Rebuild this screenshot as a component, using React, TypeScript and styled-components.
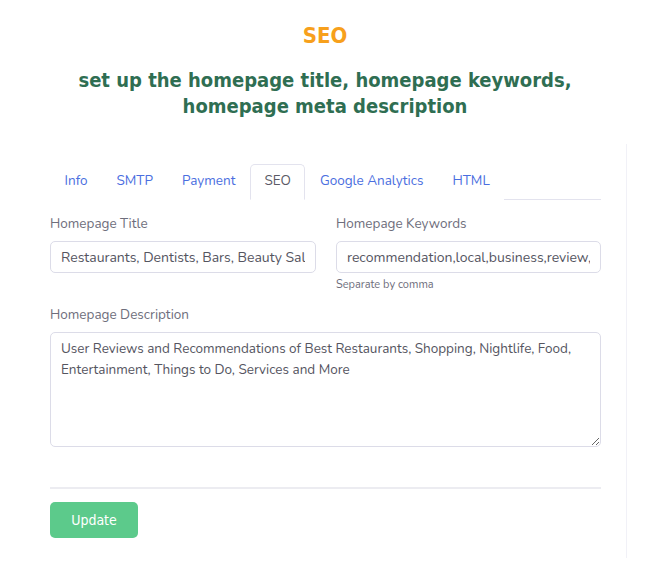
import React from "react";
import styled, { createGlobalStyle } from "styled-components";

const Global = createGlobalStyle`
  html, body { margin: 0; padding: 0; background: #ffffff; }
  body { font-family: "Nunito", "Lato", "Noto Sans", sans-serif; }
  * { box-sizing: border-box; }
`;

const Page = styled.div`
  width: 650px;
  height: 565px;
  display: flex;
  flex-direction: column;
  align-items: stretch;
  overflow: hidden;
`;

const Header = styled.header`
  display: flex;
  flex-direction: column;
  align-items: center;
  padding-top: 23px;
  font-family: "DejaVu Sans", sans-serif;
  font-stretch: condensed;
  font-weight: bold;
`;

const Title = styled.h1`
  margin: 0;
  font-size: 22px;
  line-height: 26px;
  color: #f7a01c;
`;

const Subtitle = styled.h2`
  margin: 18px 0 0;
  font-size: 20px;
  line-height: 26px;
  color: #2f6e52;
  text-align: center;
  width: 560px;
`;

const Card = styled.section`
  margin: 25px 0 0 0;
  width: 627px;
  height: 414px;
  border-right: 1px solid #f1f1f7;
  padding: 20px 25px 0 50px;
  display: flex;
  flex-direction: column;
`;

const Tabs = styled.nav`
  display: flex;
  border-bottom: 1px solid #e3e3ee;
  height: 36px;
  width: 551px;
`;

const Tab = styled.div<{ $active?: boolean }>`
  height: 36px;
  padding: 0 13.5px 3px;
  display: flex;
  align-items: center;
  font-size: 13.5px;
  color: ${(p) => (p.$active ? "#5a5a66" : "#4a6ee0")};
  border: 1px solid ${(p) => (p.$active ? "#e3e3ee" : "transparent")};
  border-bottom-color: ${(p) => (p.$active ? "#ffffff" : "transparent")};
  border-radius: 5px 5px 0 0;
  background: #fff;
  margin-bottom: -1px;
`;

const Row = styled.div`
  display: grid;
  grid-template-columns: 266px 265px;
  column-gap: 20px;
  width: 551px;
  margin-top: 15px;
`;

const Field = styled.div`
  display: flex;
  flex-direction: column;
`;

const Label = styled.label`
  font-size: 13.5px;
  line-height: 18px;
  color: #6e6e7c;
  margin-bottom: 8px;
`;

const Input = styled.input`
  height: 32px;
  width: 100%;
  border: 1px solid #dcdce8;
  border-radius: 5px;
  padding: 0 10px;
  font-family: inherit;
  font-size: 14px;
  color: #55555f;
  background: #fff;
  outline: none;
`;

const Help = styled.small`
  font-size: 11px;
  color: #6e6e7c;
  margin-top: 5px;
  line-height: 14px;
`;

const DescField = styled(Field)`
  width: 551px;
  margin-top: 14px;
`;

const TextArea = styled.textarea`
  display: block;
  width: 100%;
  height: 115px;
  border: 1px solid #dcdce8;
  border-radius: 5px;
  padding: 5px 10px;
  font-family: inherit;
  font-size: 13.5px;
  line-height: 21px;
  color: #55555f;
  background: #fff;
  outline: none;
  resize: vertical;
`;

const Divider = styled.hr`
  width: 551px;
  margin: 40px 0 0;
  border: none;
  border-top: 2px solid #ececf1;
`;

const Button = styled.button`
  margin-top: 13px;
  width: 88px;
  height: 36px;
  border: none;
  border-radius: 5px;
  background: #5cca8b;
  color: #ffffff;
  font-family: "DejaVu Sans", sans-serif;
  font-stretch: condensed;
  font-size: 14px;
`;

export default function App() {
  return (
    <Page>
      <Global />
      <Header>
        <Title>SEO</Title>
        <Subtitle>
          set up the homepage title, homepage keywords, homepage meta description
        </Subtitle>
      </Header>
      <Card>
        <Tabs>
          <Tab>Info</Tab>
          <Tab>SMTP</Tab>
          <Tab>Payment</Tab>
          <Tab $active>SEO</Tab>
          <Tab>Google Analytics</Tab>
          <Tab>HTML</Tab>
        </Tabs>
        <Row>
          <Field>
            <Label>Homepage Title</Label>
            <Input readOnly value="Restaurants, Dentists, Bars, Beauty Salons, Doctors" />
          </Field>
          <Field>
            <Label>Homepage Keywords</Label>
            <Input readOnly value="recommendation,local,business,review,friends" />
            <Help>Separate by comma</Help>
          </Field>
        </Row>
        <DescField>
          <Label>Homepage Description</Label>
          <TextArea
            readOnly
            value="User Reviews and Recommendations of Best Restaurants, Shopping, Nightlife, Food, Entertainment, Things to Do, Services and More"
          />
        </DescField>
        <Divider />
        <Button>Update</Button>
      </Card>
    </Page>
  );
}
